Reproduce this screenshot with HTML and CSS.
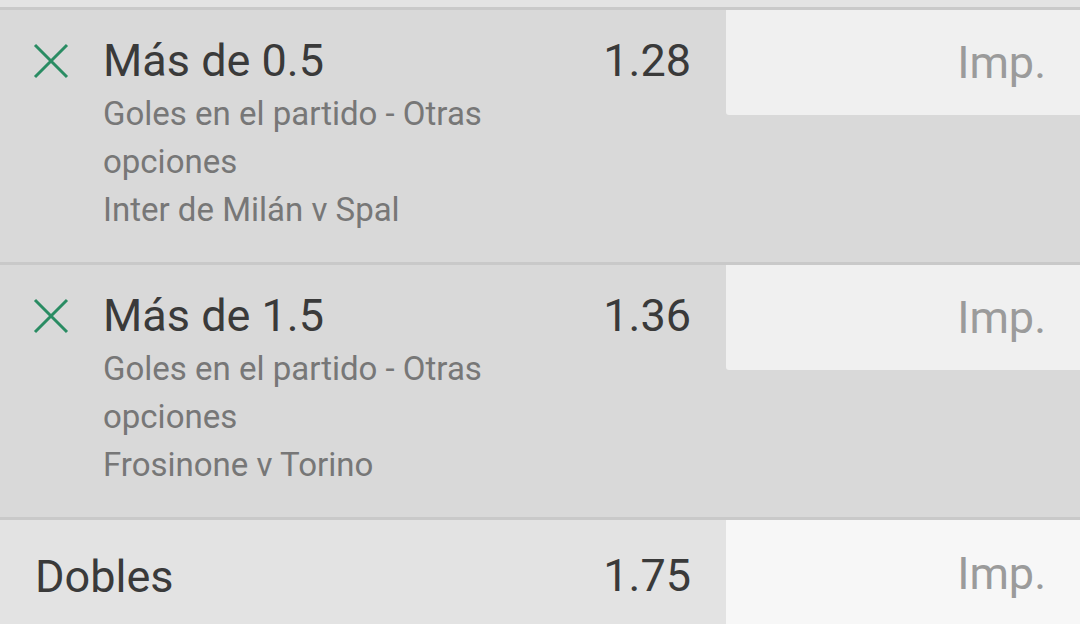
FILE: index.html
```html
<!DOCTYPE html>
<html lang="es">
<head>
<meta charset="utf-8">
<link rel="stylesheet" href="styles.css">
</head>
<body>
<div class="strip"></div>
<div class="bet">
  <div class="main">
    <svg class="remove" viewBox="0 0 36 36"><path d="M2 2 L34 34 M34 2 L2 34" stroke="#2a8c63" stroke-width="3" fill="none"/></svg>
    <div class="info">
      <div class="title">Más de 0.5</div>
      <div class="sub">Goles en el partido - Otras opciones</div>
      <div class="sub">Inter de Milán v Spal</div>
    </div>
    <div class="odds">1.28</div>
  </div>
  <div class="stake"><div class="input">Imp.</div></div>
</div>
<div class="bet">
  <div class="main">
    <svg class="remove" viewBox="0 0 36 36"><path d="M2 2 L34 34 M34 2 L2 34" stroke="#2a8c63" stroke-width="3" fill="none"/></svg>
    <div class="info">
      <div class="title">Más de 1.5</div>
      <div class="sub">Goles en el partido - Otras opciones</div>
      <div class="sub">Frosinone v Torino</div>
    </div>
    <div class="odds">1.36</div>
  </div>
  <div class="stake"><div class="input">Imp.</div></div>
</div>
<div class="multi">
  <div class="main multi-main">
    <div class="multi-name">Dobles</div>
    <div class="odds multi-odds">1.75</div>
  </div>
  <div class="multi-stake">Imp.</div>
</div>
</body>
</html>
```

FILE: styles.css
```css
html, body {
  margin: 0;
  padding: 0;
  width: 1080px;
  height: 624px;
  overflow: hidden;
  background: #d9d9d9;
  font-family: Roboto, "Liberation Sans", sans-serif;
}
.strip {
  height: 7px;
  background: #e3e3e3;
}
.bet {
  display: flex;
  height: 252px;
  border-top: 3px solid #c9c9c9;
  background: #d9d9d9;
}
.main {
  width: 726px;
  display: flex;
  align-items: flex-start;
  box-sizing: border-box;
  padding: 22px 35px 0 33px;
}
.remove {
  width: 36px;
  height: 36px;
  flex: none;
  margin-top: 11px;
  margin-right: 34px;
}
.info {
  width: 480px;
  flex: none;
}
.title {
  font-size: 45px;
  line-height: 58px;
  color: #3a3a3a;
}
.sub {
  font-size: 33px;
  line-height: 48px;
  color: #777777;
}
.odds {
  margin-left: auto;
  font-size: 45px;
  line-height: 58px;
  color: #3a3a3a;
}
.stake {
  flex: 1;
}
.input {
  height: 105px;
  background: #f0f0f0;
  border-bottom-left-radius: 3px;
  display: flex;
  align-items: center;
  justify-content: flex-end;
  padding-right: 34px;
  font-size: 45px;
  color: #9b9b9b;
}
.multi {
  display: flex;
  height: 104px;
  border-top: 3px solid #c9c9c9;
  background: #e3e3e3;
}
.multi-main {
  padding: 8px 35px 0;
  align-items: center;
}
.multi-name {
  font-size: 45px;
  color: #3a3a3a;
}
.multi-stake {
  flex: 1;
  background: #f7f7f7;
  display: flex;
  align-items: center;
  justify-content: flex-end;
  padding-right: 34px;
  padding-top: 2px;
  font-size: 45px;
  color: #9b9b9b;
}
```
